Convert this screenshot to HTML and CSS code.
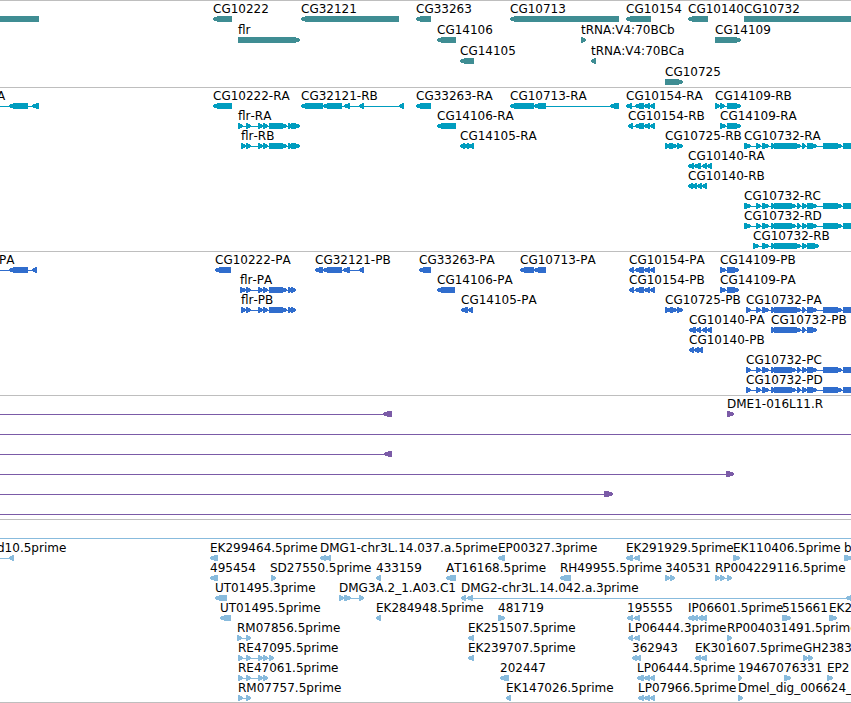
FILE: index.html
```html
<!DOCTYPE html>
<html lang="en">
<head>
<meta charset="utf-8">
<title>Genome tracks</title>
<link rel="stylesheet" href="styles.css">
</head>
<body>
<main class="browser" id="browser"></main>
<script src="tracks.js"></script>
</body>
</html>
```
FILE: styles.css
```css
body {
  margin: 0;
  background: #fff;
  color: #000;
  font-family: "DejaVu Sans", sans-serif;
  font-size: 12px;
  line-height: 17px;
  font-kerning: none;
}

.browser {
  overflow: hidden;
  border-bottom: 1px solid #bebebe;
}

.track {
  border-top: 1px solid #bebebe;
  padding-bottom: 3px;
}

.track-gene { color: #3f8d93; padding-bottom: 2px; }
.track-transcript { color: #009dbf; }
.track-protein { color: #306dcd; }
.track-clone { color: #7b5ba7; }
.track-est { color: #88bbdd; padding-bottom: 2px; }

.lane {
  position: relative;
  height: 20px;
}

.track-gene .lane { height: 21px; }

/* Labels start at the genomic position of their feature. */
.label {
  position: absolute;
  top: 0;
  color: #000;
  white-space: pre;
}

.glyphs {
  position: absolute;
  top: 15px;
  left: 0;
  width: 100%;
  height: 6px;
  overflow: visible;
  fill: currentColor;
  shape-rendering: crispEdges;
}
```
FILE: tracks.js
```js
// Feature: [label, strand, [start, end, start, end, ...], label position if not the start]
const OFF = [-20, -10];
const FAR = [4000, 4010];

const flrTail = [258, 263, 263, 268, 269, 287, 288, 291];
const rnaHead = [744, 751, 756, 761, 762, 769, 771, 774];
const protHead = [746, 751, 756, 761, 762, 769, 771, 774];
const longTail = [774, 801, 802, 806, 807, 817, 823, 842, 843, 900];
const splitTail = [774, 796, 797, 801, 802, 807, 807, 817, 823, 842, 843, 900];

const tracks = [
  { type: 'gene', lanes: [
    [
      ['', '<', [-20, 39]],
      ['CG10222', '<', [213, 232]],
      ['CG32121', '<', [301, 399]],
      ['CG33263', '<', [416, 431]],
      ['CG10713', '<', [510, 619]],
      ['CG10154', '<', [626, 651]],
      ['CG10140', '<', [688, 708]],
      ['CG10732', '>', [744, 900]]
    ],
    [
      ['flr', '>', [238, 300]],
      ['CG14106', '<', [437, 456]],
      ['tRNA:V4:70BCb', '>', [581, 586]],
      ['CG14109', '>', [715, 741]]
    ],
    [
      ['CG14105', '<', [460, 474]],
      ['tRNA:V4:70BCa', '<', [591, 596]]
    ],
    [
      ['CG10725', '>', [665, 683]]
    ]
  ] },
  { type: 'transcript', lanes: [
    [
      ['A', '<', [...OFF, 9, 28, 32, 39], -3],
      ['CG10222-RA', '<', [213, 232]],
      ['CG32121-RB', '<', [301, 323, 323, 342, 344, 350, 359, 364, 399, 404]],
      ['CG33263-RA', '<', [416, 431]],
      ['CG10713-RA', '<', [510, 534, 534, 546, 610, 619]],
      ['CG10154-RA', '<', [626, 632, 635, 644, 644, 650, 650, 655]],
      ['CG14109-RB', '>', [715, 720, 720, 725, 727, 741]]
    ],
    [
      ['flr-RA', '>', [238, 243, 246, 251, ...flrTail, 291, 300]],
      ['CG14106-RA', '<', [437, 456]],
      ['CG10154-RB', '<', [628, 633, 635, 644, 644, 650, 650, 655]],
      ['CG14109-RA', '>', [720, 726, 727, 741]]
    ],
    [
      ['flr-RB', '>', [241, 246, 246, 251, ...flrTail, 291, 300]],
      ['CG14105-RA', '<', [460, 465, 464, 469, 468, 474]],
      ['CG10725-RB', '>', [665, 671, 669, 677, 677, 683]],
      ['CG10732-RA', '>', [...rnaHead, ...longTail]]
    ],
    [
      ['CG10140-RA', '<', [688, 694, 694, 701, 702, 707, 707, 712]]
    ],
    [
      ['CG10140-RB', '<', [688, 693, 692, 697, 697, 702, 702, 707]]
    ],
    [
      ['CG10732-RC', '>', [...rnaHead, ...splitTail]]
    ],
    [
      ['CG10732-RD', '>', [...rnaHead, ...splitTail]]
    ],
    [
      ['CG10732-RB', '>', [753, 759, 762, 769, 771, 774, 774, 801, 802, 807, 807, 819]]
    ]
  ] },
  { type: 'protein', lanes: [
    [
      ['PA', '<', [...OFF, 9, 28, 32, 37], -1],
      ['CG10222-PA', '<', [215, 231]],
      ['CG32121-PB', '<', [315, 323, 323, 342, 343, 350, 359, 364]],
      ['CG33263-PA', '<', [419, 431]],
      ['CG10713-PA', '<', [520, 534, 534, 546]],
      ['CG10154-PA', '<', [629, 634, 635, 644, 644, 650, 650, 655]],
      ['CG14109-PB', '>', [720, 726, 727, 739]]
    ],
    [
      ['flr-PA', '>', [240, 246, 246, 251, ...flrTail, 291, 296]],
      ['CG14106-PA', '<', [437, 455]],
      ['CG10154-PB', '<', [629, 634, 635, 644, 644, 650, 650, 655]],
      ['CG14109-PA', '>', [720, 726, 727, 739]]
    ],
    [
      ['flr-PB', '>', [241, 246, 246, 251, ...flrTail, 291, 296]],
      ['CG14105-PA', '<', [461, 468, 468, 473]],
      ['CG10725-PB', '>', [665, 671, 670, 677, 677, 683]],
      ['CG10732-PA', '>', [...protHead, ...longTail]]
    ],
    [
      ['CG10140-PA', '<', [689, 696, 696, 701, 702, 707, 707, 712]],
      ['CG10732-PB', '>', [771, 774, 774, 801, 802, 806, 807, 817]]
    ],
    [
      ['CG10140-PB', '<', [689, 694, 694, 699, 698, 703]]
    ],
    [
      ['CG10732-PC', '>', [...protHead, ...splitTail]]
    ],
    [
      ['CG10732-PD', '>', [...protHead, ...splitTail]]
    ]
  ] },
  { type: 'clone', lanes: [
    [
      ['', '<', [...OFF, 383, 392]],
      ['DME1-016L11.R', '>', [727, 734]]
    ],
    [['', '<', [...OFF, ...FAR]]],
    [['', '<', [...OFF, 384, 392]]],
    [['', '>', [...OFF, 726, 734]]],
    [['', '>', [...OFF, 604, 613]]],
    [['', '>', [...OFF, ...FAR]]]
  ] },
  { type: 'est', lanes: [
    [['', '<', [...OFF, ...FAR]]],
    [
      ['d10.5prime', '<', [...OFF, 9, 14], -3],
      ['EK299464.5prime', '<', [210, 218]],
      ['DMG1-chr3L.14.037.a.5prime', '<', [320, 326, 325, 331]],
      ['EP00327.3prime', '<', [498, 505]],
      ['EK291929.5prime', '<', [626, 633, 634, 640]],
      ['EK110406.5prime', '>', [733, 740]],
      ['b', '>', [844, 852]]
    ],
    [
      ['495454', '<', [210, 218]],
      ['SD27550.5prime', '>', [271, 276], 270],
      ['433159', '<', [376, 381]],
      ['AT16168.5prime', '<', [446, 456]],
      ['RH49955.5prime', '<', [560, 571]],
      ['340531', '>', [665, 670, 670, 675]],
      ['RP004229116.5prime', '>', [715, 720, 720, 725, 727, 732]]
    ],
    [
      ['UT01495.3prime', '<', [215, 227]],
      ['DMG3A.2_1.A03.C1', '>', [339, 344, 344, 351, 359, 364]],
      ['DMG2-chr3L.14.042.a.3prime', '<', [461, 466, 467, 473, 846, 860]]
    ],
    [
      ['UT01495.5prime', '<', [220, 231]],
      ['EK284948.5prime', '<', [376, 381]],
      ['481719', '>', [498, 505]],
      ['195555', '<', [627, 633, 634, 640]],
      ['IP06601.5prime', '<', [688, 694, 693, 698, 698, 703, 702, 707]],
      ['515661', '>', [782, 791]],
      ['EK2', '>', [829, 837]]
    ],
    [
      ['RM07856.5prime', '>', [237, 242, 246, 251]],
      ['EK251507.5prime', '<', [468, 474]],
      ['LP06444.3prime', '<', [628, 633, 634, 640]],
      ['RP004031491.5prime', '>', [727, 732]]
    ],
    [
      ['RE47095.5prime', '>', [238, 243, 246, 251, 258, 263, 263, 268, 269, 274]],
      ['EK239707.5prime', '<', [468, 474]],
      ['362943', '<', [632, 637, 636, 641]],
      ['EK301607.5prime', '<', [695, 701, 701, 707]],
      ['GH2383', '>', [803, 808, 808, 813]]
    ],
    [
      ['RE47061.5prime', '>', [238, 243, 246, 251, 258, 263, 263, 268]],
      ['202447', '<', [500, 509]],
      ['LP06444.5prime', '<', [637, 644, 644, 650, 650, 655]],
      ['194670', '>', [738, 742]],
      ['76331', '>', [784, 791]],
      ['EP2', '>', [827, 833]]
    ],
    [
      ['RM07757.5prime', '>', [238, 243, 246, 251]],
      ['EK147026.5prime', '<', [506, 511]],
      ['LP07966.5prime', '<', [638, 644, 644, 650, 650, 655]],
      ['Dmel_dig_006624_', '>', [738, 743]]
    ]
  ] }
];

// A block with a pointed end; short blocks become triangles with a blunt back.
function block(a, b, strand) {
  const head = Math.min(b - a - 1, 5);
  if (strand === '<') {
    return `M${a} 2V4L${a + head} 6H${b}V0H${a + head}Z`;
  }
  return `M${b} 2V4L${b - head} 6H${a}V0H${b - head}Z`;
}

function featurePath(strand, spans) {
  const start = spans[0];
  const end = spans[spans.length - 1];
  let d = '';
  for (let i = 0; i < spans.length; i += 2) {
    d += block(spans[i], spans[i + 1], strand);
  }
  const intron = spans.length > 2 ? `<rect x="${start}" y="3" width="${end - start}" height="1"/>` : '';
  return intron + `<path d="${d}"/>`;
}

document.getElementById('browser').innerHTML = tracks.map(track =>
  `<section class="track track-${track.type}">` + track.lanes.map(lane =>
    '<div class="lane">' +
    '<svg class="glyphs" aria-hidden="true">' +
    lane.map(([, strand, spans]) => featurePath(strand, spans)).join('') +
    '</svg>' +
    lane.filter(f => f[0]).map(([label, , spans, at]) =>
      `<span class="label" style="left:${at === undefined ? spans[0] : at}px">${label}</span>`).join('') +
    '</div>').join('') +
  '</section>').join('');
```
